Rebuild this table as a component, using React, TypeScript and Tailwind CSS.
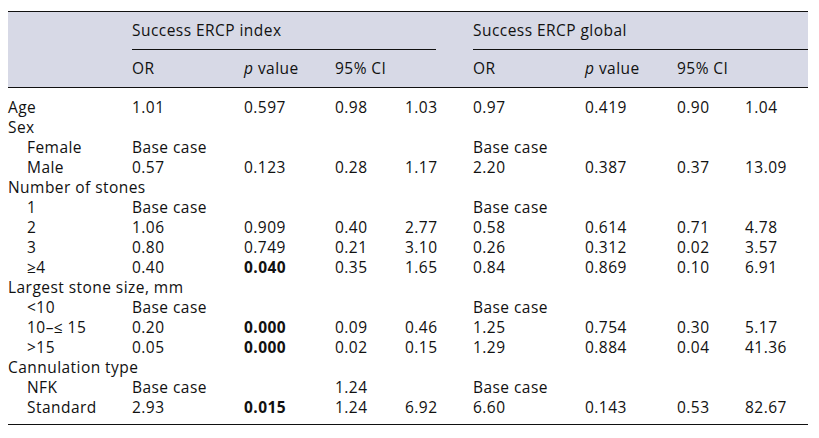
import React from "react";

type Cell = string | { b: string };
type Row = { label: string; sub?: boolean; cells?: Cell[] };

const rows: Row[] = [
  { label: "Age", cells: ["1.01", "0.597", "0.98", "1.03", "0.97", "0.419", "0.90", "1.04"] },
  { label: "Sex" },
  { label: "Female", sub: true, cells: ["Base case", "", "", "", "Base case", "", "", ""] },
  { label: "Male", sub: true, cells: ["0.57", "0.123", "0.28", "1.17", "2.20", "0.387", "0.37", "13.09"] },
  { label: "Number of stones" },
  { label: "1", sub: true, cells: ["Base case", "", "", "", "Base case", "", "", ""] },
  { label: "2", sub: true, cells: ["1.06", "0.909", "0.40", "2.77", "0.58", "0.614", "0.71", "4.78"] },
  { label: "3", sub: true, cells: ["0.80", "0.749", "0.21", "3.10", "0.26", "0.312", "0.02", "3.57"] },
  { label: "≥4", sub: true, cells: ["0.40", { b: "0.040" }, "0.35", "1.65", "0.84", "0.869", "0.10", "6.91"] },
  { label: "Largest stone size, mm" },
  { label: "<10", sub: true, cells: ["Base case", "", "", "", "Base case", "", "", ""] },
  { label: "10–≤ 15", sub: true, cells: ["0.20", { b: "0.000" }, "0.09", "0.46", "1.25", "0.754", "0.30", "5.17"] },
  { label: ">15", sub: true, cells: ["0.05", { b: "0.000" }, "0.02", "0.15", "1.29", "0.884", "0.04", "41.36"] },
  { label: "Cannulation type" },
  { label: "NFK", sub: true, cells: ["Base case", "", "1.24", "", "Base case", "", "", ""] },
  { label: "Standard", sub: true, cells: ["2.93", { b: "0.015" }, "1.24", "6.92", "6.60", "0.143", "0.53", "82.67"] },
];

const grid = "grid grid-cols-[124px_112px_91px_70px_68px_112px_92px_68px_63px]";

export default function App() {
  return (
    <div className="w-[819px] h-[438px] bg-white pt-[11px] pl-[8px] font-['Open_Sans',sans-serif] text-[15.5px] tracking-[0.45px] text-[#111111]">
      <div className="w-[800px]">
        <div className="bg-[#d7d9e6] border-t border-b border-[#111111]">
          <div className={`${grid} h-[37px] items-center`}>
            <div />
            <div className="col-span-4 whitespace-nowrap">Success ERCP index</div>
            <div className="col-span-4 whitespace-nowrap">Success ERCP global</div>
          </div>
          <div className="flex h-px">
            <div className="ml-[124px] w-[304px] bg-[#111111]" />
            <div className="ml-[37px] w-[335px] bg-[#111111]" />
          </div>
          <div className={`${grid} h-[37px] items-center`}>
            <div />
            <div>OR</div>
            <div><span className="italic">p</span> value</div>
            <div className="col-span-2">95% CI</div>
            <div>OR</div>
            <div><span className="italic">p</span> value</div>
            <div className="col-span-2">95% CI</div>
          </div>
        </div>
        <div className="pt-[9px] pb-[7px] border-b border-[#111111]">
          {rows.map((r, i) => (
            <div key={i} className={`${grid} h-[20px] leading-[20px]`}>
              <div className={`whitespace-nowrap ${r.sub ? "pl-[19px]" : ""} ${r.cells ? "" : "col-span-9"}`}>{r.label}</div>
              {r.cells?.map((c, j) => (
                <div key={j} className="whitespace-nowrap">
                  {typeof c === "string" ? c : <span className="font-bold">{c.b}</span>}
                </div>
              ))}
            </div>
          ))}
        </div>
      </div>
    </div>
  );
}
